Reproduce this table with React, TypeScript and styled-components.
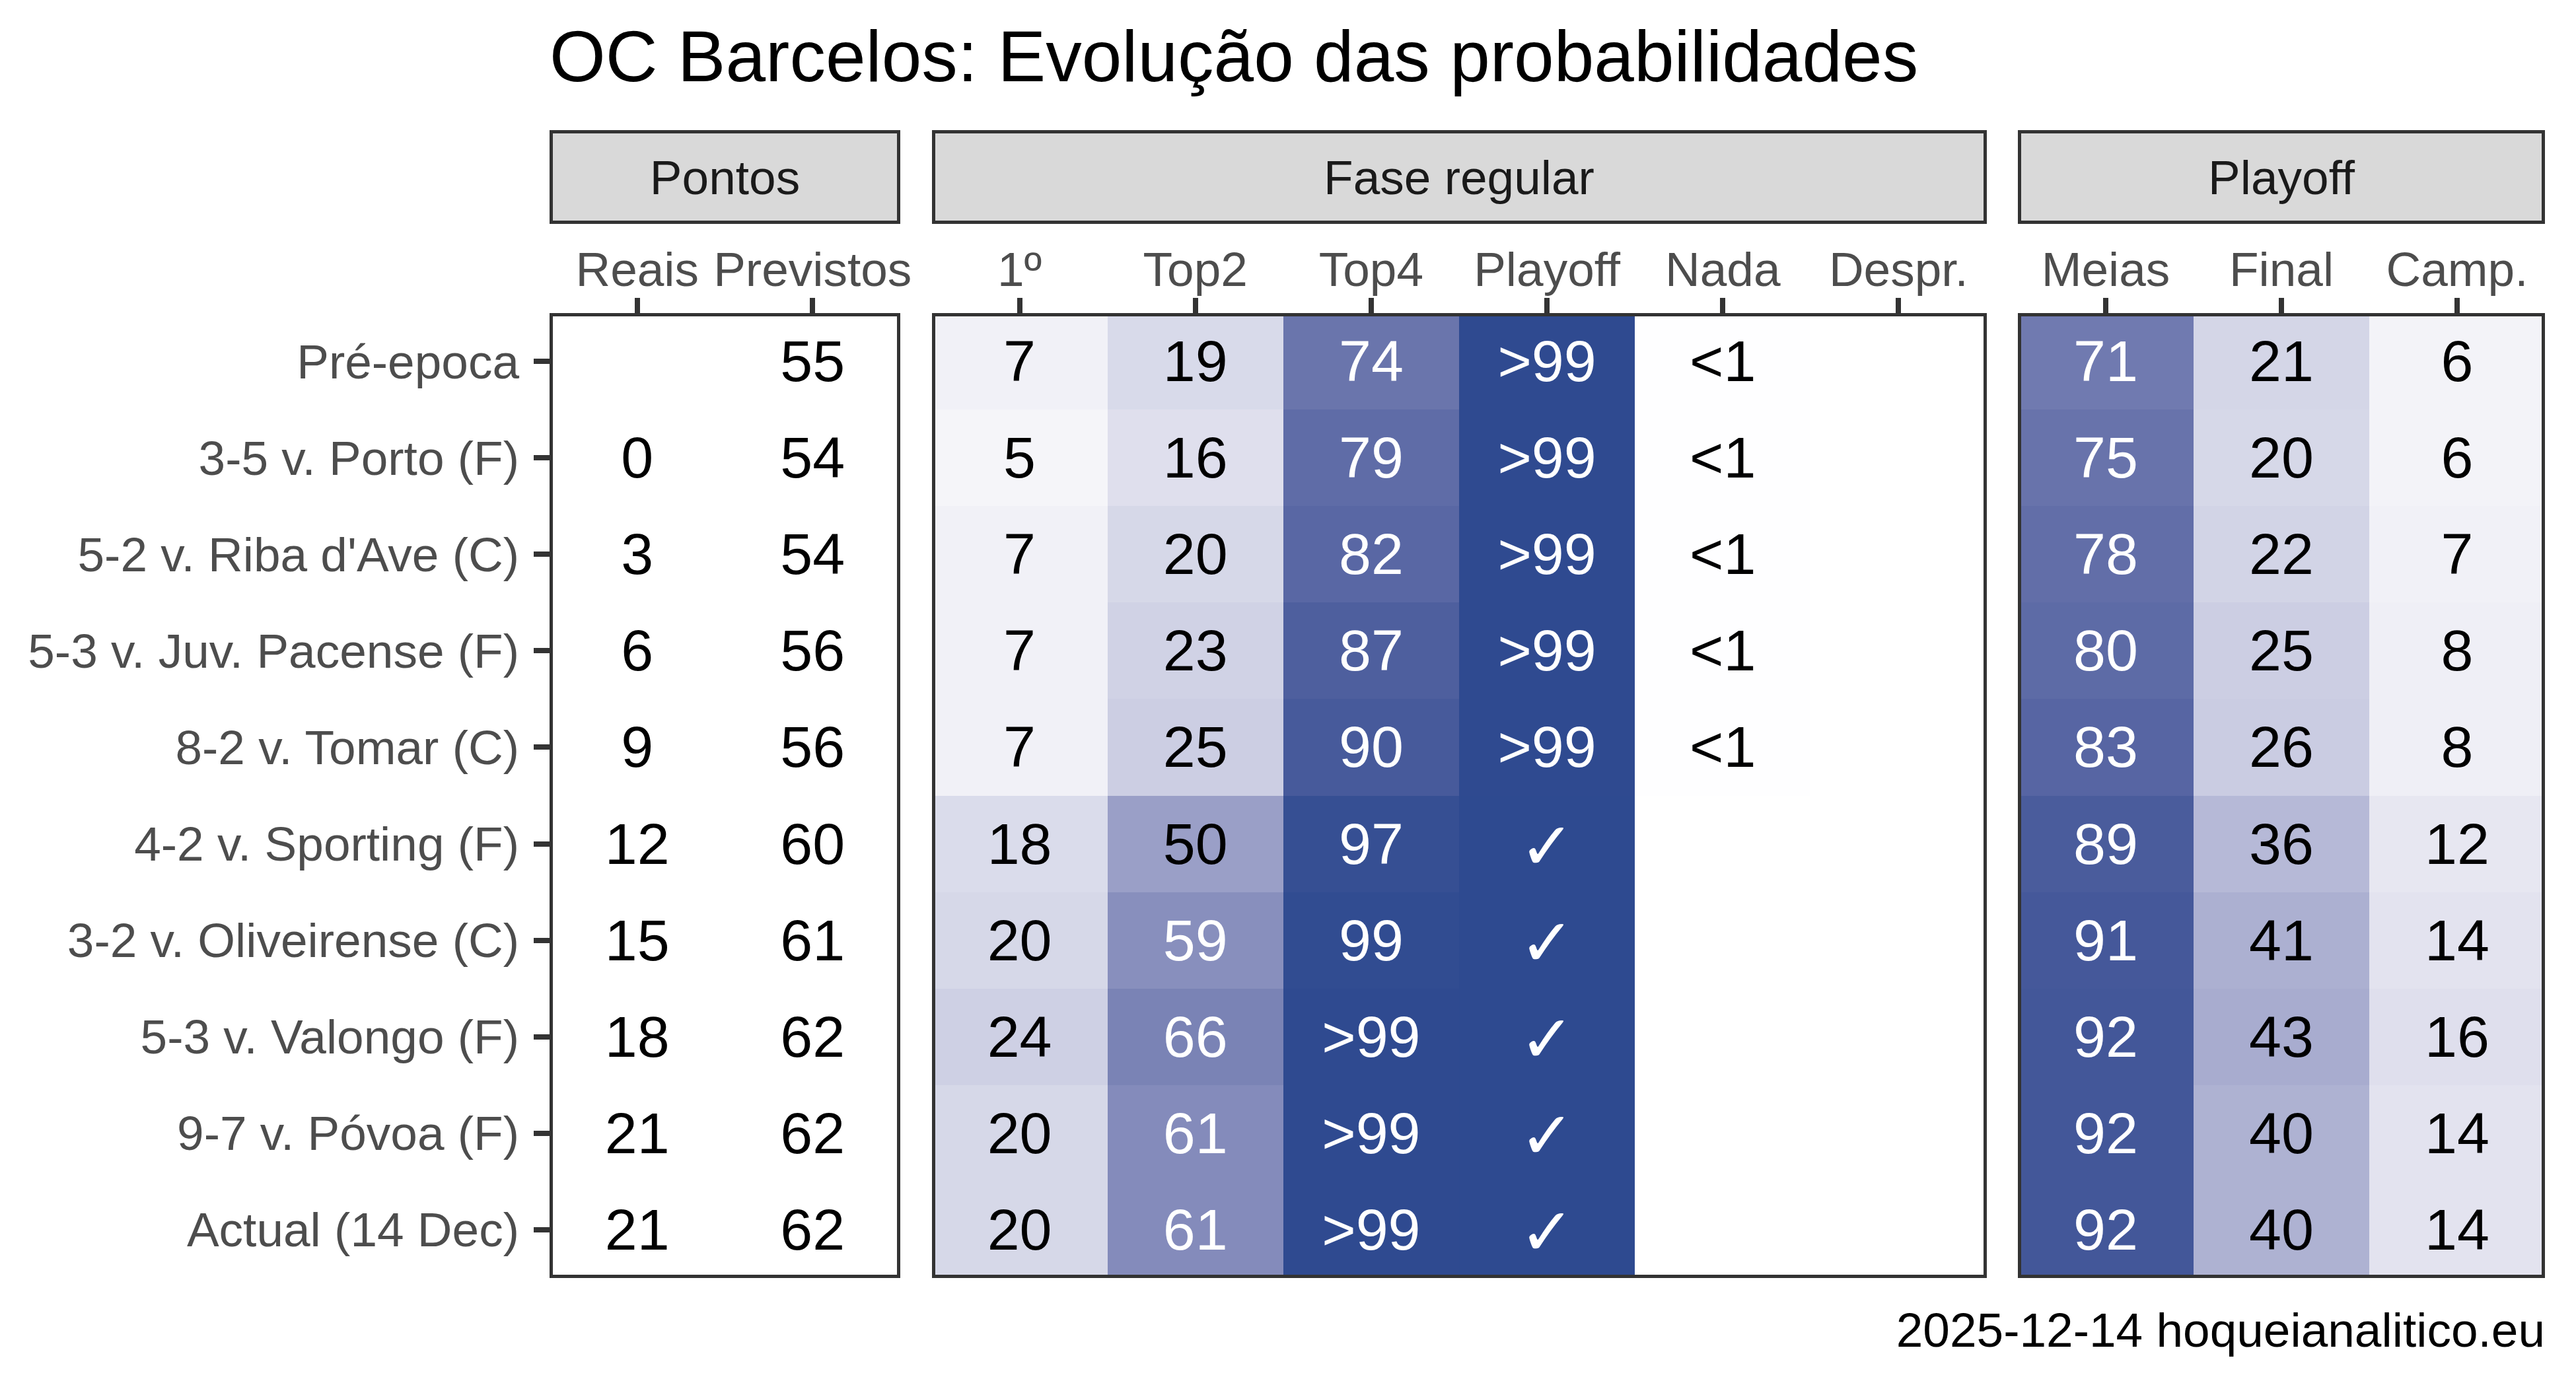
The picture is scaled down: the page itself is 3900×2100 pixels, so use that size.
import { FC, ReactElement } from 'react';
import styled, { createGlobalStyle } from 'styled-components';

// Plot values, one entry per row of the table
type Row = { label: string; pts: string[]; fase: string[]; po: string[] };

const rows: Row[] = [
  { label: 'Pré-epoca', pts: ['', '55'], fase: ['7', '19', '74', '>99', '<1', ''], po: ['71', '21', '6'] },
  { label: '3-5 v. Porto (F)', pts: ['0', '54'], fase: ['5', '16', '79', '>99', '<1', ''], po: ['75', '20', '6'] },
  { label: "5-2 v. Riba d'Ave (C)", pts: ['3', '54'], fase: ['7', '20', '82', '>99', '<1', ''], po: ['78', '22', '7'] },
  { label: '5-3 v. Juv. Pacense (F)', pts: ['6', '56'], fase: ['7', '23', '87', '>99', '<1', ''], po: ['80', '25', '8'] },
  { label: '8-2 v. Tomar (C)', pts: ['9', '56'], fase: ['7', '25', '90', '>99', '<1', ''], po: ['83', '26', '8'] },
  { label: '4-2 v. Sporting (F)', pts: ['12', '60'], fase: ['18', '50', '97', '✓', '', ''], po: ['89', '36', '12'] },
  { label: '3-2 v. Oliveirense (C)', pts: ['15', '61'], fase: ['20', '59', '99', '✓', '', ''], po: ['91', '41', '14'] },
  { label: '5-3 v. Valongo (F)', pts: ['18', '62'], fase: ['24', '66', '>99', '✓', '', ''], po: ['92', '43', '16'] },
  { label: '9-7 v. Póvoa (F)', pts: ['21', '62'], fase: ['20', '61', '>99', '✓', '', ''], po: ['92', '40', '14'] },
  { label: 'Actual (14 Dec)', pts: ['21', '62'], fase: ['20', '61', '>99', '✓', '', ''], po: ['92', '40', '14'] },
];

type Facet = { title: string; cols: string[]; key: 'pts' | 'fase' | 'po'; filled: boolean };

const facets: Facet[] = [
  { title: 'Pontos', cols: ['Reais', 'Previstos'], key: 'pts', filled: false },
  { title: 'Fase regular', cols: ['1º', 'Top2', 'Top4', 'Playoff', 'Nada', 'Despr.'], key: 'fase', filled: true },
  { title: 'Playoff', cols: ['Meias', 'Final', 'Camp.'], key: 'po', filled: true },
];

const toValue = (s: string): number => {
  if (s === '') return 0;
  if (s === '<1') return 0.3;
  if (s === '>99') return 99.7;
  if (s === '✓') return 100;
  return Number(s);
};

// White -> blue gradient, mixed in Lab space like ggplot's scale_fill_gradient
const HIGH = [46, 74, 144];

const toLin = (c: number) => {
  const v = c / 255;
  return v <= 0.04045 ? v / 12.92 : Math.pow((v + 0.055) / 1.055, 2.4);
};
const fromLin = (v: number) => {
  const c = v <= 0.0031308 ? 12.92 * v : 1.055 * Math.pow(v, 1 / 2.4) - 0.055;
  return Math.round(Math.min(1, Math.max(0, c)) * 255);
};
const f = (t: number) => (t > 0.008856 ? Math.cbrt(t) : 7.787 * t + 16 / 116);
const fi = (t: number) => (t > 0.206893 ? t * t * t : (t - 16 / 116) / 7.787);

const rgbToLab = ([r, g, b]: number[]) => {
  const R = toLin(r), G = toLin(g), B = toLin(b);
  const x = (0.4124 * R + 0.3576 * G + 0.1805 * B) / 0.95047;
  const y = 0.2126 * R + 0.7152 * G + 0.0722 * B;
  const z = (0.0193 * R + 0.1192 * G + 0.9505 * B) / 1.08883;
  return [116 * f(y) - 16, 500 * (f(x) - f(y)), 200 * (f(y) - f(z))];
};

const labToRgb = ([L, a, b]: number[]) => {
  const fy = (L + 16) / 116;
  const x = fi(fy + a / 500) * 0.95047;
  const y = fi(fy);
  const z = fi(fy - b / 200) * 1.08883;
  const r = 3.2406 * x - 1.5372 * y - 0.4986 * z;
  const g = -0.9689 * x + 1.8758 * y + 0.0415 * z;
  const bl = 0.0557 * x - 0.204 * y + 1.057 * z;
  return `rgb(${fromLin(r)}, ${fromLin(g)}, ${fromLin(bl)})`;
};

const LOW_LAB = rgbToLab([255, 255, 255]);
const HIGH_LAB = rgbToLab(HIGH);

const fillFor = (v: number) => {
  const t = Math.min(1, Math.max(0, v / 100));
  return labToRgb(LOW_LAB.map((l, i) => l + (HIGH_LAB[i] - l) * t));
};

const GlobalStyle = createGlobalStyle`
  html, body {
    margin: 0;
    padding: 0;
    background: #ffffff;
  }
  body {
    font-family: "Liberation Sans", Arial, Helvetica, sans-serif;
  }
`;

const Figure = styled.div`
  width: 3900px;
  height: 2100px;
  box-sizing: border-box;
  padding: 31px 47px 0 0;
  background: #ffffff;
  display: flex;
  flex-direction: column;
  overflow: hidden;
`;

const Title = styled.h1`
  margin: 0 0 0 832px;
  font-size: 109px;
  font-weight: normal;
  line-height: 1;
  color: #000000;
  white-space: nowrap;
`;

const Body = styled.div`
  margin-top: 57px;
  display: flex;
`;

const RowAxis = styled.div`
  width: 832px;
  flex: 0 0 832px;
  padding-top: 277px;
  display: grid;
  grid-template-rows: repeat(10, 146.1px);
`;

const AxisRow = styled.div`
  display: flex;
  align-items: center;
  justify-content: flex-end;
  font-size: 73px;
  line-height: 1;
  color: #4d4d4d;
  white-space: nowrap;
`;

const HTick = styled.span`
  margin-left: 22px;
  width: 24px;
  height: 8px;
  background: #333333;
`;

const Facets = styled.div`
  display: grid;
  grid-template-columns: 531px 1597px 798px;
  column-gap: 47.5px;
`;

const FacetColumn = styled.div`
  display: flex;
  flex-direction: column;
`;

const Strip = styled.div`
  height: 142px;
  box-sizing: border-box;
  border: 5px solid #333333;
  background: #d9d9d9;
  display: flex;
  align-items: center;
  justify-content: center;
  font-size: 73px;
  line-height: 1;
  color: #1a1a1a;
`;

const HeaderRow = styled.div<{ $n: number }>`
  margin-top: 31.5px;
  display: grid;
  grid-template-columns: repeat(${p => p.$n}, 1fr);
  font-size: 73px;
  line-height: 1;
  color: #4d4d4d;
`;

const HeaderLabel = styled.div`
  display: flex;
  justify-content: center;
  white-space: nowrap;
  min-width: 0;
`;

const TickRow = styled.div<{ $n: number }>`
  margin-top: 7.5px;
  height: 23px;
  display: grid;
  grid-template-columns: repeat(${p => p.$n}, 1fr);
  justify-items: center;
`;

const VTick = styled.span`
  width: 8px;
  height: 100%;
  background: #333333;
`;

const Panel = styled.div<{ $n: number }>`
  position: relative;
  height: 1461px;
  display: grid;
  grid-template-columns: repeat(${p => p.$n}, 1fr);
  grid-template-rows: repeat(10, 1fr);
  background: #ffffff;

  &::after {
    content: '';
    position: absolute;
    inset: 0;
    border: 5px solid #333333;
    pointer-events: none;
  }
`;

const Cell = styled.div<{ $bg: string; $light: boolean }>`
  display: flex;
  align-items: center;
  justify-content: center;
  background: ${p => p.$bg};
  color: ${p => (p.$light ? '#ffffff' : '#000000')};
  font-size: 88px;
  line-height: 1;
  white-space: nowrap;
`;

const Check = styled.span`
  font-family: "DejaVu Sans", "Liberation Sans", sans-serif;
  font-size: 100px;
  line-height: 1;
  transform: translateY(4px);
`;

const Caption = styled.div`
  margin-top: 42px;
  text-align: right;
  font-size: 73px;
  line-height: 1;
  color: #000000;
`;

const App: FC = (): ReactElement => {
  return (
    <Figure>
      <GlobalStyle />
      <Title>OC Barcelos: Evolução das probabilidades</Title>

      <Body>
        <RowAxis>
          {rows.map(r => (
            <AxisRow key={r.label}>
              {r.label}
              <HTick />
            </AxisRow>
          ))}
        </RowAxis>

        <Facets>
          {facets.map(facet => (
            <FacetColumn key={facet.title}>
              <Strip>{facet.title}</Strip>

              <HeaderRow $n={facet.cols.length}>
                {facet.cols.map(c => (
                  <HeaderLabel key={c}>{c}</HeaderLabel>
                ))}
              </HeaderRow>

              <TickRow $n={facet.cols.length}>
                {facet.cols.map(c => (
                  <VTick key={c} />
                ))}
              </TickRow>

              <Panel $n={facet.cols.length}>
                {rows.map(r =>
                  r[facet.key].map((txt, i) => {
                    const v = toValue(txt);
                    return (
                      <Cell
                        key={`${r.label}-${i}`}
                        $bg={facet.filled ? fillFor(v) : '#ffffff'}
                        $light={facet.filled && v > 55}
                      >
                        {txt === '✓' ? <Check>✓</Check> : txt}
                      </Cell>
                    );
                  })
                )}
              </Panel>
            </FacetColumn>
          ))}
        </Facets>
      </Body>

      <Caption>2025-12-14 hoqueianalitico.eu</Caption>
    </Figure>
  );
};

export default App;
